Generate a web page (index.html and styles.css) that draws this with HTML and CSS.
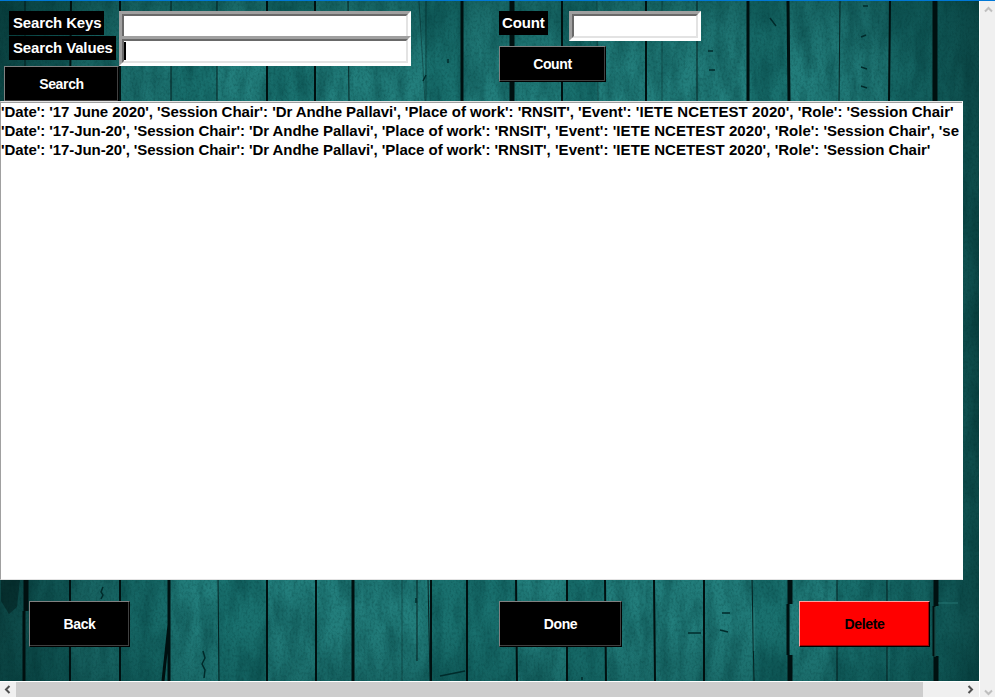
FILE: index.html
```html
<!DOCTYPE html>
<html lang="en">
<head>
<meta charset="utf-8">
<title>Search</title>
<link rel="stylesheet" href="styles.css">
</head>
<body>
<div class="window">
  <main class="stage">
    <svg class="wood" viewBox="0 0 979 680" preserveAspectRatio="none" aria-hidden="true">
      <defs>
        <filter id="grain" x="0" y="0" width="100%" height="100%" color-interpolation-filters="sRGB">
          <feTurbulence type="fractalNoise" baseFrequency="0.07 0.02" numOctaves="6" seed="8"/>
          <feColorMatrix values="0 0 0 0 0  0 0 0 0 .22  0 0 0 0 .22  2 0 0 0 -.7"/>
        </filter>
        <filter id="speck" x="0" y="0" width="100%" height="100%" color-interpolation-filters="sRGB">
          <feTurbulence type="fractalNoise" baseFrequency="0.5 0.35" numOctaves="2" seed="3"/>
          <feColorMatrix values="0 0 0 0 0  0 0 0 0 .2  0 0 0 0 .2  2 0 0 0 -.85"/>
        </filter>
        <linearGradient id="side">
          <stop offset="0" stop-color="#001c1c" stop-opacity=".5"/>
          <stop offset=".12" stop-color="#002b2b" stop-opacity=".22"/>
          <stop offset=".2" stop-color="#003030" stop-opacity="0"/>
          <stop offset=".85" stop-color="#003030" stop-opacity="0"/>
          <stop offset=".95" stop-color="#002b2b" stop-opacity=".25"/>
          <stop offset="1" stop-color="#002222" stop-opacity=".5"/>
        </linearGradient>
        <linearGradient id="vert" x2="0" y2="1">
          <stop offset="0" stop-color="#003434" stop-opacity=".3"/>
          <stop offset=".1" stop-color="#003434" stop-opacity="0"/>
          <stop offset=".92" stop-color="#003434" stop-opacity="0"/>
          <stop offset="1" stop-color="#003434" stop-opacity=".25"/>
        </linearGradient>
      </defs>
      <rect width="979" height="680" fill="#237e7c"/>
      <g fill="#0c5a5a" fill-opacity=".35">
        <path d="M0 0H71V100H0zM171 0h46v100h-46zM267 0h48v100h-48zM425 0h38v100h-38zM562 0h35v100h-35zM748 0h40v100h-40zM890 0h89v680h-89z"/>
        <path d="M0 578H70V680H0zM120 578h49v102h-49zM218 578h49v102h-49zM431 578h85v102h-85zM567 578h38v102h-38zM752 578h38v102h-38zM837 578h50v102h-50z"/>
      </g>
      <rect width="979" height="680" filter="url(#grain)" opacity=".4"/>
      <rect width="979" height="680" filter="url(#speck)" opacity=".3"/>
      <rect width="979" height="680" fill="url(#side)"/>
      <rect width="979" height="680" fill="url(#vert)"/>
      <g fill="none" stroke="#001010">
        <path stroke-width="1" opacity=".8" d="M25 0V100M171 0V100M217 0V100M348 0L349 100M840 0L839 100M697 0V100M417 578V660M428 578L430 680M752 578L754 680M837 578V680M887 578V680M218 578L219 680"/>
        <path stroke-width="1" opacity=".35" d="M419 0L425 100M426 0V100M597 0L598 100M662 0V100M402 578V680"/>
        <path stroke-width="2" d="M71 0L70 100M120 0V100M267 0V100M315 0V100M562 0V100M646 0V100M890 0L889 100M70 578V680M120 578V680M267 578V680M316 578V680M431 578V680M467 578V680M516 578L517 680M567 578V680M605 578L606 680M654 578L655 680M704 578V680"/>
        <path stroke-width="3" d="M462 0V100M748 0V100M788 0L789 100M353 578V680M169 578V624L163 680M169 624V680"/>
        <path stroke-width="5" d="M512 0V100M935 0V100M26 578V610M790 578V603M790 654V680M936 578V605M936 655V680"/>
        <path stroke-width="3" d="M24 610V680M788 603V654M934 605V655"/>
      </g>
      <path d="M1 578H20L17 606 9 613 1 600z" fill="#001414" opacity=".45"/>
      <g fill="none" stroke="#002b2b" stroke-width="1.5">
        <path d="M103 586l-2 5 2 3-2 4M203 650l2 7-3 6 3 6-1 8M448 58v4M416 597v5M861 36l5-2M861 66l6 2M861 85l6 2M863 5h5M708 50h5M709 69h6M770 17l6 8M688 632h13M722 612h8M440 675l25-5M582 676v3M423 80l3-6M720 629l8 2"/>
      </g>
      <path d="M938 602h20M935 606v50M754 606v44" stroke="#36918e" opacity=".55"/>
    </svg>

    <header class="top">
      <form class="search" onsubmit="return false">
        <div class="labels">
          <label class="tag keys">Search Keys</label>
          <label class="tag values">Search Values</label>
          <button class="btn find"><span>Search</span></button>
        </div>
        <div class="entries">
          <div class="entry clipped"></div>
          <div class="entry"><i class="caret"></i></div>
        </div>
      </form>
      <section class="count">
        <div class="count-row">
          <label class="tag total">Count</label>
          <div class="entry"></div>
        </div>
        <button class="btn tally"><span>Count</span></button>
      </section>
    </header>

    <ul class="list">
      <li><span class="who">'Date': '17 June 2020', 'Session Chair': 'Dr Andhe Pallavi', </span>'Place of work': 'RNSIT', <span class="event">'Event': 'IETE NCETEST 2020', </span>'Role': 'Session Chair'</li>
      <li><span class="who">'Date': '17-Jun-20', 'Session Chair': 'Dr Andhe Pallavi', </span>'Place of work': 'RNSIT', <span class="event">'Event': 'IETE NCETEST 2020', </span>'Role': 'Session Chair', 'se</li>
      <li><span class="who">'Date': '17-Jun-20', 'Session Chair': 'Dr Andhe Pallavi', </span>'Place of work': 'RNSIT', <span class="event">'Event': 'IETE NCETEST 2020', </span>'Role': 'Session Chair'</li>
    </ul>

    <footer class="actions">
      <button class="btn back"><span>Back</span></button>
      <button class="btn done"><span>Done</span></button>
      <button class="btn delete"><span>Delete</span></button>
    </footer>
  </main>

  <div class="vbar">
    <svg width="9" height="7" viewBox="0 0 9 7"><path d="M1 5.5L4.5 2 8 5.5"/></svg>
    <svg width="9" height="7" viewBox="0 0 9 7"><path d="M1 1.5L4.5 5 8 1.5"/></svg>
  </div>
  <div class="hbar">
    <svg width="7" height="9" viewBox="0 0 7 9"><path d="M5.5 1L2 4.5 5.5 8"/></svg>
    <div class="thumb"></div>
    <svg width="7" height="9" viewBox="0 0 7 9"><path d="M1.5 1L5 4.5 1.5 8"/></svg>
  </div>
</div>
</body>
</html>
```
FILE: styles.css
```css
*, *::before { box-sizing: border-box; }
body {
  margin: 0;
  overflow: hidden;
  font-family: "Liberation Sans", Arial, sans-serif;
  font-weight: bold;
  color: #000;
}
.window {
  width: 995px;
  height: 697px;
  display: grid;
  grid-template-columns: 979px 16px;
  grid-template-rows: 680px 16px;
  border-top: 1px solid #0078d7;
  background: #f0f0f0;
}
.stage { position: relative; overflow: hidden; isolation: isolate; }
.wood { position: absolute; inset: 0; width: 100%; height: 100%; z-index: -1; }

.top { display: flex; height: 100px; padding-top: 10px; }
.search { display: flex; width: 499px; }
.labels { width: 119px; display: flex; flex-direction: column; align-items: flex-start; }
.tag {
  flex: none;
  height: 24px;
  margin: 0 0 1px 9px;
  padding-left: 4px;
  background: #000;
  color: #fff;
  font-size: 15px;
  line-height: 23px;
  letter-spacing: -0.15px;
  white-space: nowrap;
}
.keys { width: 95px; }
.values { width: 107px; }
.total { width: 49px; margin: 0; padding-left: 3px; }

.entries { width: 292px; }
.entry {
  position: relative;
  height: 30px;
  padding: 0;
  background: #fff;
  border: 3px solid;
  border-color: #a0a0a0 #fff #fff #a0a0a0;
}
.entry::before {
  content: "";
  display: block;
  height: 24px;
  border: 2px solid;
  border-color: #696969 #e3e3e3 #e3e3e3 #696969;
}
.clipped { margin-bottom: -5px; }
.caret { position: absolute; left: 2px; top: 3px; width: 2px; height: 18px; background: #000; }

.btn {
  flex: none;
  display: flex;
  align-items: center;
  justify-content: center;
  margin: 0;
  padding: 0;
  border: 1px solid;
  border-color: #808080 #000 #000 #808080;
  box-shadow: inset -1px -1px #404040;
  border-radius: 0;
  background: #000;
  color: #fff;
  font: bold 14px/16px "Liberation Sans", Arial, sans-serif;
  letter-spacing: -0.35px;
}
.find { width: 115px; height: 36px; margin: 5px 0 0 4px; }
.count-row { display: flex; }
.count-row .entry { width: 132px; margin-left: 21px; }
.tally { width: 107px; height: 36px; margin-top: 5px; }

.list {
  position: relative;
  width: 963px;
  height: 479px;
  margin: 0;
  padding: 0;
  list-style: none;
  background: #fff;
  border: 1px solid;
  border-color: #e3e3e3 #fff #e3e3e3 #a0a0a0;
  box-shadow: inset 0 1px #a0a0a0;
  overflow: hidden;
}
.list li {
  height: 19px;
  font-size: 15px;
  line-height: 19px;
  letter-spacing: -0.01px;
  white-space: nowrap;
}
.who { letter-spacing: -0.07px; }
.event { letter-spacing: 0.07px; }

.actions { display: flex; padding: 21px 0 0 29px; }
.actions .btn { height: 46px; }
.back { width: 101px; }
.done { width: 123px; margin-left: 369px; }
.actions .delete {
  width: 131px;
  margin-left: 177px;
  background: #f00;
  color: #000;
  border-color: #ffa0a0 #000 #000 #ffa0a0;
  box-shadow: inset -1px -1px #a00000;
}

.vbar {
  grid-row: 1 / 3;
  grid-column: 2;
  display: flex;
  flex-direction: column;
  justify-content: space-between;
  align-items: center;
  padding: 5px 0 1px 2px;
  border-left: 1px solid #fff;
}
.hbar { display: flex; align-items: center; border-top: 1px solid #fff; padding: 0 4px; }
.hbar .thumb { width: 907px; height: 15px; margin: 0 44px 0 5px; background: #cdcdcd; }
.vbar svg, .hbar svg { flex: none; fill: none; stroke-width: 2; }
.vbar svg { stroke: #bfbfbf; }
.hbar svg { stroke: #505050; }
```
